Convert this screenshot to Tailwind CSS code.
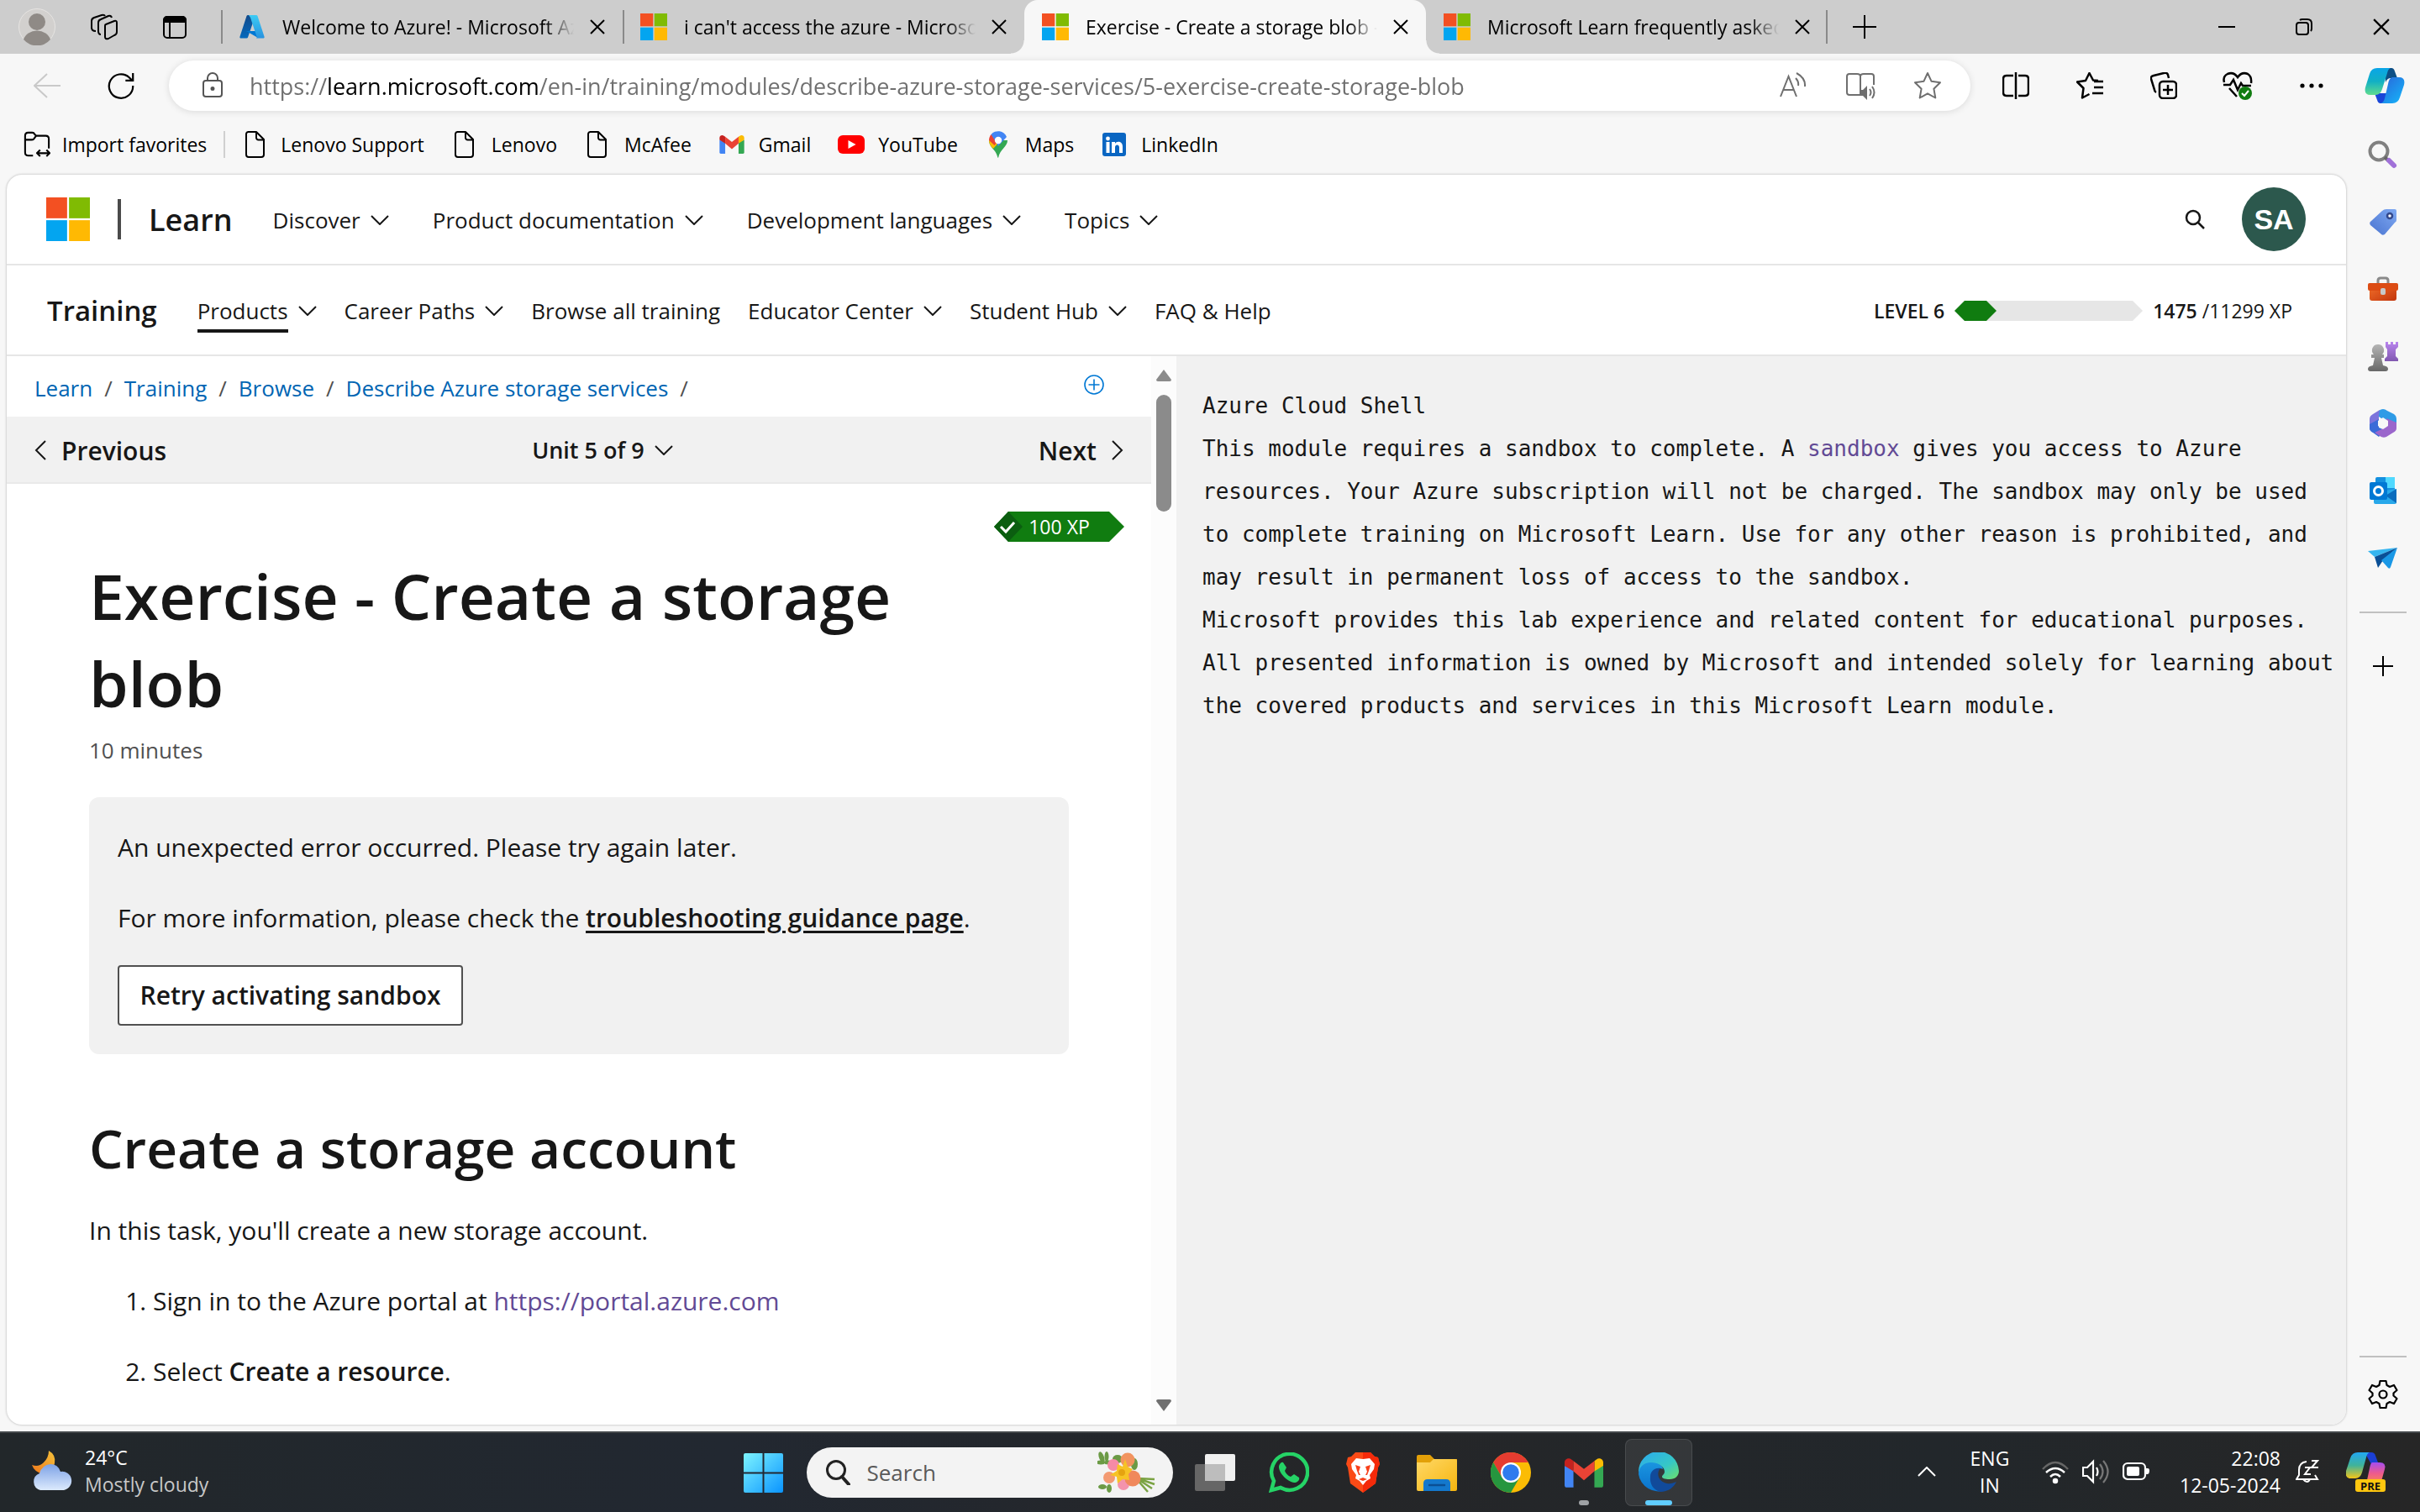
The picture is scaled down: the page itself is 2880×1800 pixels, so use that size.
<!DOCTYPE html>
<html lang="en">
<head>
<meta charset="utf-8">
<meta name="viewport" content="width=device-width, initial-scale=1">
<title>Exercise - Create a storage blob - Training | Microsoft Learn</title>
<script src="https://cdn.jsdelivr.net/npm/@tailwindcss/browser@4"></script>
</head>
<body class="min-h-screen flex flex-col overflow-hidden bg-[#f7f7f7] text-[#171717] font-['Open_Sans','Noto_Sans',sans-serif]">

<!-- Shared symbols -->
<svg class="absolute size-0" aria-hidden="true">
  <defs>
    <linearGradient id="azA" x1="0" y1="0" x2="0" y2="1"><stop offset="0" stop-color="#114a8b"/><stop offset="1" stop-color="#0669bc"/></linearGradient>
    <linearGradient id="azB" x1="0" y1="0" x2="0" y2="1"><stop offset="0" stop-color="#3ccbf4"/><stop offset="1" stop-color="#2892df"/></linearGradient>
    <linearGradient id="cpA" x1="0" y1="0" x2="0" y2="1"><stop offset="0" stop-color="#0aa5e8"/><stop offset=".5" stop-color="#12b0c4"/><stop offset="1" stop-color="#5fdc8e"/></linearGradient>
    <linearGradient id="cpB" x1="0" y1="0" x2="1" y2="1"><stop offset="0" stop-color="#2a62d8"/><stop offset="1" stop-color="#14b8fb"/></linearGradient>
    <linearGradient id="cqA" x1="0" y1="0" x2="0" y2="1"><stop offset="0" stop-color="#22a7f2"/><stop offset=".5" stop-color="#3fb39a"/><stop offset="1" stop-color="#f5c518"/></linearGradient>
    <linearGradient id="cqB" x1="0" y1="0" x2="0" y2="1"><stop offset="0" stop-color="#a44df0"/><stop offset=".5" stop-color="#ee5a8c"/><stop offset="1" stop-color="#fb8a4a"/></linearGradient>
    <linearGradient id="winG" x1="0" y1="0" x2="1" y2="1"><stop offset="0" stop-color="#7df4ff"/><stop offset="1" stop-color="#0a94ff"/></linearGradient>
    <linearGradient id="tagG" x1="1" y1="0" x2="0" y2="1"><stop offset="0" stop-color="#7fa9f2"/><stop offset="1" stop-color="#4a74d0"/></linearGradient>
    <linearGradient id="boxG" x1="0" y1="0" x2="1" y2="1"><stop offset="0" stop-color="#f3702a"/><stop offset="1" stop-color="#c2350c"/></linearGradient>
    <linearGradient id="greyG" x1="0" y1="0" x2="0" y2="1"><stop offset="0" stop-color="#b5b5b5"/><stop offset="1" stop-color="#686868"/></linearGradient>
    <linearGradient id="purG" x1="0" y1="0" x2="0" y2="1"><stop offset="0" stop-color="#b985ee"/><stop offset="1" stop-color="#8158b0"/></linearGradient>
    <linearGradient id="cldG" x1="0" y1="0" x2="0" y2="1"><stop offset="0" stop-color="#7da2e6"/><stop offset="1" stop-color="#dceafd"/></linearGradient>
    <linearGradient id="moonG" x1="1" y1="0" x2="0" y2="1"><stop offset="0" stop-color="#f4c23b"/><stop offset="1" stop-color="#f0761a"/></linearGradient>
    <linearGradient id="fldG" x1="0" y1="0" x2="1" y2="1"><stop offset="0" stop-color="#ffd866"/><stop offset="1" stop-color="#f6b50f"/></linearGradient>
    <linearGradient id="edgA" x1="0" y1="0" x2="1" y2="1"><stop offset="0" stop-color="#2aa9f0"/><stop offset=".6" stop-color="#36c7c6"/><stop offset="1" stop-color="#6ee06a"/></linearGradient>
    <linearGradient id="edgB" x1="0" y1="0" x2="0" y2="1"><stop offset="0" stop-color="#1a95e0"/><stop offset="1" stop-color="#0a72cc"/></linearGradient>
    <symbol id="ms" viewBox="0 0 32 32"><path fill="#f35022" d="M0 0h15.3v15.3H0z"/><path fill="#80bb03" d="M16.7 0H32v15.3H16.7z"/><path fill="#03a5f0" d="M0 16.7h15.3V32H0z"/><path fill="#ffb903" d="M16.7 16.7H32V32H16.7z"/></symbol>
    <symbol id="chev" viewBox="0 0 22 12"><path d="M1 1l10 10L21 1" fill="none" stroke="currentColor" stroke-width="2"/></symbol>
    <symbol id="x" viewBox="0 0 18 18"><path d="M1 1l16 16M17 1L1 17" fill="none" stroke="currentColor" stroke-width="2"/></symbol>
    <symbol id="file" viewBox="0 0 32 32"><path d="M7 1h10l9 9v18a3 3 0 0 1-3 3H8a3 3 0 0 1-3-3V3.5A2.500 2.500 0 0 1 7.500 1M17 1v7a2.500 2.500 0 0 0 2.500 2.500H26" fill="none" stroke="currentColor" stroke-width="2" stroke-linejoin="round"/></symbol>
    <symbol id="gmail" viewBox="0 0 48 36"><path fill="#4285f4" d="M0 9v24a3 3 0 0 0 3 3h8V14z"/><path fill="#34a853" d="M48 9v24a3 3 0 0 1-3 3h-8V14z"/><path fill="#c5221f" d="M0 9V5c0-4 5-6.500 8.500-3.800L11 3v13z"/><path fill="#fbbc04" d="M48 9V5c0-4-5-6.500-8.500-3.800L37 3v13z"/><path fill="#ea4335" d="M11 3l13 10L37 3v13L24 27 11 16z"/></symbol>
  </defs>
</svg>

<!-- Tab strip -->
<header class="flex items-center h-16 bg-[#cdcdcd] text-black">
  <button class="ml-[22px]" aria-label="Profile"><svg class="size-11 block" viewBox="0 0 44 44"><circle cx="22" cy="22" r="21.500" fill="#d2d0ce" stroke="#e6e4e2"/><circle cx="22" cy="16" r="10" fill="#8f8a86"/><path d="M6 36a16.500 14 0 0 1 32 0 21 21 0 0 1-32 0z" fill="#8f8a86" transform="translate(0 1)"/></svg></button>
  <button class="ml-[42px]" aria-label="Workspaces"><svg class="size-8 block" viewBox="0 0 32 32" fill="none" stroke="currentColor" stroke-width="2" stroke-linejoin="round"><path d="M18 13l10-4q3-1 3 2v11q0 3-3 4l-7 4q-4 1-4-2V15q0-2 1-2z"/><path d="M12 25q-3 0-3-4V11q0-3 3-4l9-4q3-1 4 2"/><path d="M6 20q-5 0-5-4V8q0-3 3-4l9-3q3-1 4 1" transform="translate(0 1)"/></svg></button>
  <button class="ml-[52px]" aria-label="Tab actions"><svg class="size-8 block" viewBox="0 0 32 32"><rect x="3" y="4" width="26" height="25" rx="4" fill="none" stroke="currentColor" stroke-width="2"/><path d="M2 11V8a5 5 0 0 1 5-5h18a5 5 0 0 1 5 5v3zM9 11h2v18H9z"/></svg></button>
  <div class="flex ml-[39px] h-16 text-[23px]" role="tablist">
    <div role="tab" class="relative flex items-center w-[478px] pl-[21px] before:absolute before:left-0 before:top-3 before:h-10 before:w-[2px] before:bg-[#8a8a8a]">
      <svg class="size-8" viewBox="0 0 32 32"><path fill="url(#azA)" d="M11 2h9L11 28.500a1.600 1.600 0 0 1-1.500 1H3a1.600 1.600 0 0 1-1.500-2.100L9.500 3A1.600 1.600 0 0 1 11 2z"/><path fill="#0078d4" d="M8.500 21h13.500l1 8-13-7.500z"/><path fill="url(#azB)" d="M12 2h9a1.600 1.600 0 0 1 1.500 1.100l8 24.300a1.600 1.600 0 0 1-1.500 2.100H20a1.600 1.600 0 0 0 1.500-2.100L14 5z"/></svg>
      <span class="ml-5 w-[347px] overflow-hidden whitespace-nowrap [mask-image:linear-gradient(to_right,black_90%,transparent)]">Welcome to Azure! - Microsoft Azure</span>
      <button class="ml-[19px]" aria-label="Close tab"><svg class="size-[18px] block"><use href="#x"/></svg></button>
    </div>
    <div role="tab" class="relative flex items-center w-[478px] pl-[21px] before:absolute before:left-0 before:top-3 before:h-10 before:w-[2px] before:bg-[#8a8a8a]">
      <svg class="size-8"><use href="#ms"/></svg>
      <span class="ml-5 w-[347px] overflow-hidden whitespace-nowrap [mask-image:linear-gradient(to_right,black_90%,transparent)]">i can't access the azure - Microsoft Q&amp;A</span>
      <button class="ml-[19px]" aria-label="Close tab"><svg class="size-[18px] block"><use href="#x"/></svg></button>
    </div>
    <div role="tab" aria-selected="true" class="relative flex items-center w-[478px] pl-[21px] rounded-t-[16px] bg-[#f7f7f7] before:absolute before:-left-4 before:bottom-0 before:size-4 before:bg-[radial-gradient(circle_at_0_0,transparent_15px,#f7f7f7_16px)] after:absolute after:-right-4 after:bottom-0 after:size-4 after:bg-[radial-gradient(circle_at_100%_0,transparent_15px,#f7f7f7_16px)]">
      <svg class="size-8"><use href="#ms"/></svg>
      <span class="ml-5 w-[347px] overflow-hidden whitespace-nowrap [mask-image:linear-gradient(to_right,black_90%,transparent)]">Exercise - Create a storage blob - Training</span>
      <button class="ml-[19px]" aria-label="Close tab"><svg class="size-[18px] block"><use href="#x"/></svg></button>
    </div>
    <div role="tab" class="relative flex items-center w-[478px] pl-[21px] after:absolute after:right-0 after:top-3 after:h-10 after:w-[2px] after:bg-[#8a8a8a]">
      <svg class="size-8"><use href="#ms"/></svg>
      <span class="ml-5 w-[347px] overflow-hidden whitespace-nowrap [mask-image:linear-gradient(to_right,black_90%,transparent)]">Microsoft Learn frequently asked questions</span>
      <button class="ml-[19px]" aria-label="Close tab"><svg class="size-[18px] block"><use href="#x"/></svg></button>
    </div>
  </div>
  <button class="ml-[30px]" aria-label="New tab"><svg class="size-7 block" viewBox="0 0 28 28"><path d="M14 0v28M0 14h28" stroke="currentColor" stroke-width="2"/></svg></button>
  <div class="ml-auto flex">
    <button class="w-[92px] flex justify-center" aria-label="Minimise"><svg class="size-5" viewBox="0 0 20 20"><path d="M0 10h20" stroke="currentColor" stroke-width="2"/></svg></button>
    <button class="w-[92px] flex justify-center" aria-label="Restore"><svg class="size-5" viewBox="0 0 20 20" fill="none" stroke="currentColor" stroke-width="2"><rect x="1" y="5" width="14" height="14" rx="3"/><path d="M5 2q1-1 3-1h6q5 0 5 5v6q0 2-1 3"/></svg></button>
    <button class="w-[92px] flex justify-center" aria-label="Close"><svg class="size-5"><use href="#x"/></svg></button>
  </div>
</header>

<!-- Toolbar -->
<div class="flex items-center h-[76px] text-black">
  <button class="ml-10" aria-label="Back" disabled><svg class="size-8 block" viewBox="0 0 32 32" fill="none" stroke="#c9c9c9" stroke-width="2"><path d="M32 16H1M16 2L1 16l15 14"/></svg></button>
  <button class="ml-14" aria-label="Refresh"><svg class="size-8 block" viewBox="0 0 36 36" fill="none" stroke="currentColor" stroke-width="2.500"><path d="M34 18A16 16 0 1 1 29 7l4 4M34 1v10h-10"/></svg></button>
  <div class="ml-[41px] flex-1 flex items-center h-[60px] rounded-full bg-white shadow-[0_1px_8px_rgba(0,0,0,0.12)] text-[#6f6f6f]">
    <svg class="ml-9 size-8" viewBox="0 0 32 32" fill="none" stroke="#555" stroke-width="2"><rect x="5" y="10" width="22" height="19" rx="3"/><path d="M10 10V7a6 6 0 0 1 12 0v3"/><circle cx="16" cy="19.500" r="1.500" fill="#555"/></svg>
    <input type="text" aria-label="Address" value="https://learn.microsoft.com/en-in/training/modules/describe-azure-storage-services/5-exercise-create-storage-blob" class="ml-7 flex-1 h-11 text-[27px] outline-none text-transparent bg-clip-text bg-[linear-gradient(to_right,#6f6f6f_93px,#000_93px,#000_343px,#6f6f6f_343px)]">
    <button class="w-20 flex justify-center" aria-label="Read aloud"><svg class="size-8" viewBox="0 0 32 32" fill="none" stroke="currentColor" stroke-width="2"><path d="M1 29L10.500 5 20 29M4.500 21h12M19 7q4 4 3 9M20 1q11 6 10 16"/></svg></button>
    <button class="w-20 flex justify-center" aria-label="Immersive reader"><svg class="size-9" viewBox="0 0 36 36"><path d="M18 5v24M19 29H5q-3 0-3-3V7q0-3 3-3h9q4 0 4 3 0-3 4-3h9q3 0 3 3v10" fill="none" stroke="currentColor" stroke-width="2"/><path d="M18 23h3l5-5v17l-5-5h-3z" fill="currentColor"/><path d="M29 22q3 4 0 8M32 19q5 7 0 14" fill="none" stroke="currentColor" stroke-width="2"/></svg></button>
    <button class="w-20 mr-[11px] flex justify-center" aria-label="Add to favourites"><svg class="size-[34px]" viewBox="0 0 34 34" fill="none" stroke="currentColor" stroke-width="2" stroke-linejoin="round"><path d="M17 2l4.600 9.800 10.400 1.400-7.600 7.500 1.900 10.800L17 26.300l-9.300 5.200 1.900-10.800L2 13.200l10.400-1.400z"/></svg></button>
  </div>
  <div class="flex items-center ml-[10px]">
    <button class="w-[88px] flex justify-center" aria-label="Split screen"><svg class="size-8" viewBox="0 0 32 32" fill="none" stroke="currentColor" stroke-width="2.500"><path d="M13 28H5q-4 0-4-4V8q0-4 4-4h8M19 4h8q4 0 4 4v16q0 4-4 4h-8M16 0v32"/></svg></button>
    <button class="w-[88px] flex justify-center" aria-label="Favourites"><svg class="size-8" viewBox="0 0 32 32" fill="none" stroke="currentColor" stroke-width="2.500" stroke-linejoin="round"><path d="M26 10l-6-.5L15.500 1 11 10 1 11.500l7.500 7.500L7 30.500l8.500-4.500M21 11h11M21 18h11M19 25h13"/></svg></button>
    <button class="w-[88px] flex justify-center" aria-label="Collections"><svg class="size-8" viewBox="0 0 32 32" fill="none" stroke="currentColor" stroke-width="2.500"><rect x="11" y="11" width="20" height="20" rx="4"/><path d="M21 15v12M15 21h12M7 24q-2-1-2-3L1 8Q0 5 4 4l12-3q4-1 5 2l1 4"/></svg></button>
    <button class="w-[88px] flex justify-center" aria-label="Browser essentials"><svg class="size-9" viewBox="0 0 36 36" fill="none" stroke="currentColor" stroke-width="2.500"><path d="M2 14Q0 7 6 4q7-3 12 4 5-7 12-4 5 3 4 11M8 21l9 10"/><path d="M1 17h8l4-6 5 12 4-8 2 3h10"/><circle cx="27" cy="27" r="8" fill="#107c10" stroke="none"/><path d="M23 27l3 3 5-6" stroke="#fff" stroke-width="2"/></svg></button>
    <button class="w-[88px] flex justify-center" aria-label="Settings and more"><svg class="w-7 h-2" viewBox="0 0 28 8"><circle cx="3" cy="4" r="2.600"/><circle cx="14" cy="4" r="2.600"/><circle cx="25" cy="4" r="2.600"/></svg></button>
    <button class="w-[85px] flex justify-center" aria-label="Copilot"><svg class="size-12" viewBox="0 0 48 48"><path d="M24 3h8q3 0 4 4l3 8h-8q-4 0-6 5z" fill="#0d4f86"/><path d="M12 33h16l-4 12h-5q-3 0-4-4z" fill="#1a46d8"/><path d="M15 3h16q-3 1-4 6l-6 19q-2 7-8 7H7q-8 0-6-9L6 10q2-7 9-7z" fill="url(#cpA)"/><path d="M33 14h8q8 0 6 9l-5 15q-2 7-9 7H19q4-1 5-6l4-17q1-7 5-8z" fill="url(#cpB)"/></svg></button>
  </div>
</div>

<div class="flex-1 flex min-h-0">
  <div class="flex-1 flex flex-col min-w-0">
    <!-- Favourites bar -->
    <nav class="flex items-center gap-8 h-16 pl-7 text-[23px] text-black whitespace-nowrap" aria-label="Favourites bar">
      <a href="#" class="flex items-center gap-[14px]"><svg class="size-8" viewBox="0 0 34 34" fill="none" stroke="currentColor" stroke-width="2.200" stroke-linejoin="round"><path d="M12 31H6q-4 0-4-4V6q0-4 4-4h5q2 0 3 2l2 2h12q4 0 4 4v12M2 11h8q2 0 3-1l3-4M17 28h16M21 24l-4 4 4 4M29 24l4 4-4 4"/></svg>Import favorites</a>
      <span class="h-8 w-[2px] -ml-3 -mr-3 bg-[#d0d0d0]"></span>
      <a href="#" class="flex items-center gap-[14px]"><svg class="size-8"><use href="#file"/></svg>Lenovo Support</a>
      <a href="#" class="flex items-center gap-4"><svg class="size-8"><use href="#file"/></svg>Lenovo</a>
      <a href="#" class="flex items-center gap-4"><svg class="size-8"><use href="#file"/></svg>McAfee</a>
      <a href="#" class="flex items-center gap-4"><svg class="w-8 h-[22px]"><use href="#gmail"/></svg>Gmail</a>
      <a href="#" class="flex items-center gap-4"><svg class="size-8" viewBox="0 0 32 32"><rect y="5" width="32" height="22" rx="6" fill="#f00"/><path d="M12.500 11l9 5-9 5z" fill="#fff"/></svg>YouTube</a>
      <a href="#" class="flex items-center gap-4"><svg class="size-8" viewBox="0 0 32 32"><path d="M16 32c-1 0-1-4-4-8-3-4-7-7-7-13h22c0 8-9 10-11 21z" fill="#34a853"/><path d="M5 11c0 4 2 7 5 10l9-10z" fill="#fbbc04"/><path d="M5 11c0-3 1-5 2.500-7l9 7-5 6z" fill="#ea4335"/><path d="M7.500 4A11 11 0 0 1 26 7L16 18z" fill="#4285f4"/><circle cx="16" cy="11" r="4.200" fill="#fff"/></svg>Maps</a>
      <a href="#" class="flex items-center gap-4"><svg class="size-8" viewBox="0 0 32 32"><rect x="2" y="2" width="28" height="28" rx="3" fill="#0a66c2"/><g fill="#fff"><circle cx="8.500" cy="9" r="2.400"/><path d="M6.500 13h4v13h-4zM13 13h4v2c2-3.500 9-3 9 3.500V26h-4v-6.500c0-4-5-4-5 0V26h-4z"/></g></svg>LinkedIn</a>
    </nav>

    <!-- Page frame -->
    <div class="flex-1 flex flex-col min-h-0 ml-2 mt-1 mb-2 rounded-[18px] overflow-hidden bg-white shadow-[0_0_3px_rgba(0,0,0,0.3)]">
      <div class="flex items-center h-[108px] pl-[47px] pr-12 border-b-2 border-[#e6e6e6] text-[26px] whitespace-nowrap">
        <a href="#" aria-label="Microsoft"><svg class="size-[52px] block"><use href="#ms"/></svg></a>
        <span class="ml-[33px] w-[4px] h-12 bg-[#4a4a4a]"></span>
        <a href="#" class="ml-[33px] pt-[2px] text-[36px] font-semibold">Learn</a>
        <nav class="flex ml-12 gap-[52px] pt-[2px]">
          <button class="flex items-center gap-3">Discover<svg class="w-[22px] h-3"><use href="#chev"/></svg></button>
          <button class="flex items-center gap-3">Product documentation<svg class="w-[22px] h-3"><use href="#chev"/></svg></button>
          <button class="flex items-center gap-3">Development languages<svg class="w-[22px] h-3"><use href="#chev"/></svg></button>
          <button class="flex items-center gap-3">Topics<svg class="w-[22px] h-3"><use href="#chev"/></svg></button>
        </nav>
        <button class="ml-auto" aria-label="Search"><svg class="size-6 block" viewBox="0 0 24 24" fill="none" stroke="currentColor" stroke-width="2.500"><circle cx="10" cy="10" r="8"/><path d="M15.500 15.500L23 23"/></svg></button>
        <button class="ml-11 size-[76px] rounded-full bg-[#2c584d] text-white font-bold text-[34px] font-['Liberation_Sans',sans-serif]">SA</button>
      </div>
      <div class="flex items-center h-[108px] pl-12 pr-16 pt-[2px] border-b-2 border-[#e6e6e6] text-[26px] whitespace-nowrap">
        <a href="#" class="text-[33px] font-semibold">Training</a>
        <nav class="flex ml-12 gap-[33px]">
          <button class="flex items-center gap-3"><span class="relative after:absolute after:inset-x-0 after:-bottom-[6px] after:h-[4px] after:bg-[#171717]">Products</span><svg class="w-[22px] h-3"><use href="#chev"/></svg></button>
          <button class="flex items-center gap-3">Career Paths<svg class="w-[22px] h-3"><use href="#chev"/></svg></button>
          <a href="#">Browse all training</a>
          <button class="flex items-center gap-3">Educator Center<svg class="w-[22px] h-3"><use href="#chev"/></svg></button>
          <button class="flex items-center gap-3">Student Hub<svg class="w-[22px] h-3"><use href="#chev"/></svg></button>
          <a href="#">FAQ &amp; Help</a>
        </nav>
        <div class="ml-auto flex items-center gap-3 text-[23px]">
          <span class="font-semibold">LEVEL 6</span>
          <svg class="w-56 h-6" viewBox="0 0 224 24"><path fill="#e6e6e6" d="M12 0h200l12 12-12 12H12L0 12z"/><path fill="#107c10" d="M12 0h26l12 12-12 12H12L0 12z"/></svg>
          <span><b class="font-semibold">1475</b> /11299 XP</span>
        </div>
      </div>

      <div class="flex-1 flex min-h-0">
        <!-- Unit -->
        <main class="flex-1 min-w-0 overflow-hidden">
          <div class="flex items-center justify-between h-[72px] pt-1 pl-[33px] pr-14 text-[26px] text-[#505050]">
            <nav class="flex gap-[14px]" aria-label="Breadcrumb"><a href="#" class="text-[#0065b3]">Learn</a>/<a href="#" class="text-[#0065b3]">Training</a>/<a href="#" class="text-[#0065b3]">Browse</a>/<a href="#" class="text-[#0065b3]">Describe Azure storage services</a>/</nav>
            <button class="pb-2" aria-label="Add"><svg class="size-6 block" viewBox="0 0 24 24" fill="none" stroke="#0078d4" stroke-width="1.600"><circle cx="12" cy="12" r="11"/><path d="M12 5.500v13M5.500 12h13"/></svg></button>
          </div>
          <div class="flex items-center justify-between h-20 px-[33px] pt-[2px] bg-[#f1f1f1] border-b-2 border-[#e9e9e9] font-semibold">
            <a href="#" class="flex items-center gap-[18px] text-[30px]"><svg class="w-[14px] h-6" viewBox="0 0 14 24"><path d="M13 1L2 12l11 11" fill="none" stroke="currentColor" stroke-width="2"/></svg>Previous</a>
            <button class="flex items-center gap-3 text-[27px]">Unit 5 of 9<svg class="w-[22px] h-3"><use href="#chev"/></svg></button>
            <a href="#" class="flex items-center gap-[18px] text-[30px]">Next<svg class="w-[14px] h-6" viewBox="0 0 14 24"><path d="M1 1l11 11L1 23" fill="none" stroke="currentColor" stroke-width="2"/></svg></a>
          </div>
          <div class="flex justify-end pt-[33px] pr-8">
            <span class="relative flex items-center justify-center w-[155px] h-9 text-[23px] text-white"><svg class="absolute inset-0 size-full" viewBox="0 0 155 36"><path fill="#107c10" d="M17 0h120l18 18-18 18H17L0 18z"/><path fill="#0b5e10" d="M17 0l17 18-17 18L0 18z"/><path d="M8 18l6 6L24 13" fill="none" stroke="#fff" stroke-width="3"/></svg><span class="relative">100 XP</span></span>
          </div>
          <article class="pl-[98px] pr-[98px] text-[30px] leading-[48px]">
            <h1 class="mt-3 pr-12 text-[75px] leading-[104px] font-semibold">Exercise - Create a storage blob</h1>
            <p class="mt-2 text-[26px] leading-10 text-[#505050]">10 minutes</p>
            <section class="mt-9 rounded-xl bg-[#f1f1f1] px-[34px] pt-9 pb-[34px]">
              <p>An unexpected error occurred. Please try again later.</p>
              <p class="mt-9">For more information, please check the <a href="#" class="font-semibold underline decoration-[3px] underline-offset-4">troubleshooting guidance page</a>.</p>
              <button class="mt-8 h-[72px] w-[411px] rounded border-2 border-[#505050] bg-white font-semibold whitespace-nowrap">Retry activating sandbox</button>
            </section>
            <h2 class="mt-[70px] text-[64px] leading-[84px] font-semibold">Create a storage account</h2>
            <p class="mt-8">In this task, you'll create a new storage account.</p>
            <ol class="mt-9 pl-[76px] list-decimal space-y-9">
              <li>Sign in to the Azure portal at <a href="#" class="text-[#624a95]">https://portal.azure.com</a></li>
              <li>Select <b class="font-semibold">Create a resource</b>.</li>
            </ol>
          </article>
        </main>
        <!-- Scrollbar -->
        <div class="w-[30px] flex flex-col items-center pt-4 pb-4 bg-[#fcfcfc]">
          <svg class="w-5 h-[14px]" viewBox="0 0 20 14"><path d="M10 0l9 12q0 2-2 2H3q-2 0-2-2z" fill="#8b8b8b"/></svg>
          <div class="mt-4 w-[18px] h-[139px] rounded-full bg-[#8b8b8b]"></div>
          <svg class="mt-auto w-5 h-[14px]" viewBox="0 0 20 14"><path d="M10 14l9-12q0-2-2-2H3Q1 0 1 2z" fill="#707070"/></svg>
        </div>
        <!-- Cloud shell -->
        <aside class="w-[1392px] pl-[31px] pr-3 pt-[34px] bg-[#f1f1f1] text-[26px] leading-[51px] font-['DejaVu_Sans_Mono',monospace]">
          <p>Azure Cloud Shell</p>
          <p>This module requires a sandbox to complete. A <a href="#" class="text-[#624a95]">sandbox</a> gives you access to Azure resources. Your Azure subscription will not be charged. The sandbox may only be used to complete training on Microsoft Learn. Use for any other reason is prohibited, and may result in permanent loss of access to the sandbox.</p>
          <p>Microsoft provides this lab experience and related content for educational purposes. All presented information is owned by Microsoft and intended solely for learning about the covered products and services in this Microsoft Learn module.</p>
        </aside>
      </div>
    </div>
  </div>

  <!-- Browser side bar -->
  <aside class="w-[88px] flex flex-col items-center pt-1 pb-[26px] text-black">
    <button class="h-20" aria-label="Search"><svg class="size-9" viewBox="0 0 36 36"><circle cx="13" cy="14" r="10.500" fill="none" stroke="#808080" stroke-width="4"/><path d="M20 21l4 4" stroke="#666" stroke-width="4"/><path d="M25 25l6 6" stroke="#a071d8" stroke-width="6" stroke-linecap="round"/></svg></button>
    <button class="h-20" aria-label="Shopping"><svg class="size-9" viewBox="0 0 36 36"><path d="M22 3h10q2 0 2 2v11q0 2-2 3L20 33q-3 2-5-1L3 22q-2-3 1-5L17 5q2-2 5-2z" fill="url(#tagG)"/><circle cx="26" cy="11" r="3" fill="#fff" stroke="#33488c" stroke-width="2.500"/></svg></button>
    <button class="h-20" aria-label="Tools"><svg class="size-9" viewBox="0 0 36 36"><path d="M12 12V8q0-3 3-3h6q3 0 3 3v4" fill="none" stroke="#8a8a8a" stroke-width="3"/><rect x="2" y="12" width="32" height="20" rx="3" fill="url(#boxG)"/><rect y="11" width="36" height="9" rx="2" fill="#dc4c14"/><rect x="15" y="17" width="6" height="8" rx="2" fill="#c8c8c8"/></svg></button>
    <button class="h-20" aria-label="Games"><svg class="size-9" viewBox="0 0 36 36"><path d="M21 1h3v3h3V1h3v3h3V1h3v6l-3 3v8l3 3v3H20v-3l3-3v-8l-2-3z" fill="url(#purG)"/><path d="M12 4a7 7 0 0 1 5 12h2v4h-3l2 9q6 1 6 4 0 3-3 3H3q-3 0-3-3 0-3 6-4l2-9H4v-4h3A7 7 0 0 1 12 4z" fill="url(#greyG)"/></svg></button>
    <button class="h-20" aria-label="Microsoft 365"><svg class="size-9" viewBox="0 0 36 36"><path d="M13 3q5-4 10 0l8 4q3 2 3 6v11L13 10z" fill="#2f9be6"/><path d="M14 2L6 7q-4 2-4 6v10q0 4 5 6l6-4V9z" fill="#7c74dc"/><path d="M2 19v5q0 3 4 5l7 5 7-8-7-3V13z" fill="#3a6bd8"/><path d="M34 17v7q0 3-4 5l-8 5q-4 2-8-1l-6-4 14-7V12z" fill="#9b66cc"/><path d="M18 11l6 4v6l-6 4-6-4v-6z" fill="#f7f7f7"/></svg></button>
    <button class="h-20" aria-label="Outlook"><svg class="size-9" viewBox="0 0 36 36"><rect x="9" y="2" width="23" height="24" rx="2" fill="#1490df"/><path d="M21 2h11v13H21z" fill="#50d9ff"/><path d="M7 20l27-4v16q0 2-2 2H9q-2 0-2-2z" fill="#28a8ea"/><path d="M34 16v17L21 24z" fill="#0a6cbd"/><rect x="2" y="8" width="21" height="21" rx="2" fill="#0078d4"/><circle cx="12.500" cy="18.500" r="5" fill="none" stroke="#fff" stroke-width="3"/></svg></button>
    <button class="h-20" aria-label="Drop"><svg class="size-9" viewBox="0 0 36 36"><path d="M0 10L35 6 8 17z" fill="#35b5f0"/><path d="M35 6L8 17l4 13 6-9z" fill="#0a4f96"/><path d="M35 6L16 21l8 9q2 2 3-1z" fill="#1a98e6"/></svg></button>
    <span class="mt-6 h-[2px] w-14 bg-[#c0c0c0]"></span>
    <button class="mt-[51px]" aria-label="Customise"><svg class="size-6 block" viewBox="0 0 24 24"><path d="M12 0v24M0 12h24" stroke="currentColor" stroke-width="2"/></svg></button>
    <span class="mt-auto h-[2px] w-14 bg-[#c0c0c0]"></span>
    <button class="mt-[26px]" aria-label="Settings"><svg class="size-9 block" viewBox="0 0 36 36" fill="none" stroke="currentColor" stroke-width="2.200" stroke-linejoin="round"><path d="M14.500 2h7l1 5 3.500 2 5-2 3.500 6-4 3.500v3l4 3.500-3.500 6-5-2-3.500 2-1 5h-7l-1-5-3.500-2-5 2L1.500 23l4-3.500v-3L1.500 13 5 7l5 2 3.500-2z"/><circle cx="18" cy="18" r="4.500"/></svg></button>
  </aside>
</div>

<!-- Task bar -->
<footer class="grid grid-cols-[1fr_auto_1fr] items-center h-24 border-t-2 border-[#44484b] bg-[linear-gradient(to_right,#22272a,#222831_30%,#252628_55%,#22272b_80%,#262626)] text-white text-[23px]">
  <button class="flex items-center pl-[37px] pb-1 gap-[14px] text-left leading-8">
    <svg class="size-[50px]" viewBox="0 0 50 50"><path d="M21 1q9 5 7 15t-13 13Q4 27 1 18q8 3 14-3T21 1z" fill="url(#moonG)"/><path d="M11 48a10.500 10.500 0 0 1-1-20q3-10 13-11 9 0 12 9a11 11 0 0 1 4 22z" fill="url(#cldG)"/></svg>
    <span class="block">24°C<br><span class="text-[#c8c8c8]">Mostly cloudy</span></span>
  </button>
  <div class="flex items-center pl-[18px]">
    <button aria-label="Start"><svg class="size-[47px] block" viewBox="0 0 47 47"><path fill="url(#winG)" d="M2 0h20.500v22.500H0V2q0-2 2-2zM24.500 0H45q2 0 2 2v20.500H24.500zM0 24.500h22.500V47H2q-2 0-2-2zM24.500 24.500H47V45q0 2-2 2H24.500z"/></svg></button>
    <label class="ml-7 flex items-center w-[436px] h-[60px] rounded-full bg-[#f3f3f3] pl-[22px] pr-5">
      <svg class="size-[30px]" viewBox="0 0 30 30" fill="none" stroke="#222" stroke-width="3"><circle cx="13" cy="12" r="10.500"/><path d="M20 20l8 9" stroke-width="4" stroke-linecap="round"/></svg>
      <input type="search" placeholder="Search" class="ml-5 w-[200px] text-[26px] outline-none text-[#555] placeholder:text-[#5a5a5a]">
      <svg class="ml-auto w-[70px] h-[50px]" viewBox="0 0 70 50"><g stroke="#7ba343" stroke-width="2.500" fill="none"><path d="M48 32l20 1M48 32l20 7M47 32l18 12M46 32l14 16"/></g><g fill="#6b9a45"><ellipse cx="5" cy="7" rx="3" ry="7" transform="rotate(-20 5 7)"/><ellipse cx="11" cy="6" rx="2.500" ry="6"/><ellipse cx="4" cy="13" rx="5" ry="2.500"/><ellipse cx="13" cy="13" rx="5" ry="2.500"/><ellipse cx="6" cy="42" rx="5" ry="3"/><ellipse cx="14" cy="44" rx="3" ry="5"/><ellipse cx="24" cy="9" rx="6" ry="5"/><ellipse cx="44" cy="15" rx="4" ry="7"/></g><circle cx="19" cy="16" r="7" fill="#f58aa6"/><circle cx="31" cy="39" r="7" fill="#f493ac"/><circle cx="36" cy="10" r="8.500" fill="#f2945f"/><circle cx="14" cy="31" r="7" fill="#f39a72"/><circle cx="42" cy="32" r="9.500" fill="#f0885c"/><path d="M33 9l3 9 6 3-5 6 1 7-8-1-6 5-1-8-8-2 8-5 1-8 6 3z" fill="#f7c325"/><circle cx="29" cy="25" r="4" fill="#e5a310"/></svg>
    </label>
    <button class="ml-[26px]" aria-label="Task view"><svg class="size-12 block" viewBox="0 0 48 48"><rect y="14" width="36" height="32" rx="2" fill="#666"/><rect x="12" y="2" width="36" height="32" rx="2" fill="#f0f0f0"/><path d="M12 14h24v20H12z" fill="#bdbdbd"/></svg></button>
    <button class="ml-10" aria-label="WhatsApp"><svg class="size-12 block" viewBox="0 0 48 48"><path d="M3 45l3-11A21.500 21.500 0 1 1 14 42z" fill="none" stroke="#25d366" stroke-width="4.500"/><path d="M17 12c-2-1-5 2-5 6 1 8 10 17 18 18 4 0 7-3 6-6l-6-4-4 3c-3-1-6-4-7-7l2-4z" fill="#25d366"/></svg></button>
    <button class="ml-10" aria-label="Brave"><svg class="size-12 block" viewBox="0 0 48 48"><path d="M15 0h18l5 5 4 1 2 8-2 4-3 19-15 11L9 37 6 18l-2-4 2-8 4-1z" fill="#fb4a16"/><path d="M24 0h9l5 5 4 1 2 8-2 4-3 19-15 11z" fill="#f42a0a"/><path d="M24 8l8-1 6 7-1 6-5 7 1 4-5 3-4 5-4-5-5-3 1-4-5-7-1-6 6-7z" fill="#fff"/><path d="M15 15l6 2-2 6 2 4h-2l-2-5zM33 15l-6 2 2 6-2 4h2l2-5zM19 32l5-2 5 2-5 2z" fill="#f8401a"/></svg></button>
    <button class="ml-10" aria-label="File Explorer"><svg class="size-12 block" viewBox="0 0 48 48"><path d="M0 14V5q0-2 2-2h14l5 5h27v10z" fill="#e3a008"/><path d="M0 12h16l4-4h26q2 0 2 2v34q0 2-2 2H2q-2 0-2-2z" fill="url(#fldG)"/><path d="M8 46V37q0-5 5-5h22q5 0 5 5v9z" fill="#1478cc"/><path d="M15 39h18" stroke="#0b4f94" stroke-width="2.500" stroke-linecap="round"/></svg></button>
    <button class="ml-10" aria-label="Chrome"><svg class="size-12 block" viewBox="0 0 48 48"><circle cx="24" cy="24" r="24" fill="#fbbc04"/><path d="M3.200 12A24 24 0 0 1 44.800 12H24L13.600 30z" fill="#e53c30"/><path d="M3.200 12A24 24 0 0 0 24 48l10.400-18L24 24l-10.400 6z" fill="#26963f"/><circle cx="24" cy="24" r="12" fill="#fff"/><circle cx="24" cy="24" r="9.800" fill="#2f7bee"/></svg></button>
    <button class="relative ml-10 after:absolute after:left-[17px] after:-bottom-[21px] after:w-3 after:h-[6px] after:rounded-full after:bg-[#9fa2a5]" aria-label="Gmail"><svg class="w-[46px] h-[35px] block"><use href="#gmail"/></svg></button>
    <button class="relative ml-[26px] size-20 flex items-center justify-center rounded-lg bg-white/8 border border-white/10 after:absolute after:left-[23px] after:bottom-0 after:w-8 after:h-[6px] after:rounded-full after:bg-[#60cdff]" aria-label="Microsoft Edge"><svg class="size-12" viewBox="0 0 48 48"><path d="M0 24A24 24 0 0 1 48 22c0 6-4 10-11 10-6 0-9-1-9-3s3-3 3-6c0-5-5-9-12-9C10 14 3 18 0 24z" fill="url(#edgA)"/><path d="M0 26c0-8 6-14 15-14 8 0 14 4 14 8-6-3-13 1-13 9 0 9 7 14 16 16A24 24 0 0 1 0 26z" fill="url(#edgB)"/><path d="M26 47c-8-2-13-9-12-18 0-6 5-11 12-10-5 5-3 16 8 18 4 1 8-1 11-2-3 7-10 12-19 12z" fill="#114a9a"/></svg></button>
  </div>
  <div class="flex items-center justify-end pr-10 pb-[2px] leading-8">
    <button aria-label="Show hidden icons"><svg class="w-[22px] h-3 block rotate-180"><use href="#chev"/></svg></button>
    <button class="ml-10 w-12 text-center">ENG IN</button>
    <button class="ml-[38px] flex items-center gap-4" aria-label="Network, sound, battery">
      <svg class="size-8" viewBox="0 0 32 32" fill="none" stroke="#fff" stroke-width="2.500"><path d="M1 13Q16-3 31 13" stroke="#666"/><path d="M5 17q11-10 22 0M10 22q6-6 12 0"/><circle cx="16" cy="27" r="2" fill="#fff"/></svg>
      <svg class="size-8" viewBox="0 0 32 32" fill="none" stroke="#fff" stroke-width="2.200"><path d="M1 11h5l7-7v24l-7-7H1z"/><path d="M17 11q3 5 0 10"/><path d="M21 7q7 9 0 18M25 3q11 13 0 26" stroke="#777"/></svg>
      <svg class="size-8" viewBox="0 0 32 32"><rect x="1" y="6" width="26" height="19" rx="5" fill="none" stroke="#fff" stroke-width="2.200"/><rect x="5" y="10" width="15" height="11" rx="2" fill="#fff"/><path d="M28 12h2q2 0 2 3t-2 4h-2z" fill="#fff"/></svg>
    </button>
    <button class="ml-9 text-right">22:08<br>12-05-2024</button>
    <button class="ml-[18px]" aria-label="Notifications"><svg class="size-7 block" viewBox="0 0 28 28" fill="none" stroke="#fff" stroke-width="2"><path d="M13 2Q4 3 4 12v6l-3 5h25l-3-5M9 23q5 6 8 0M19 1h7l-7 8h8M11 9h6l-6 8h7"/></svg></button>
    <button class="ml-8" aria-label="Copilot preview"><svg class="size-12 block" viewBox="0 0 48 48"><path d="M22 1h8q4 0 5 4l3 8-8 2z" fill="#1b3fd4"/><path d="M14 1h14q-3 1-4 6l-5 18q-2 7-8 7H6q-8 0-6-9L5 8q2-7 9-7z" fill="url(#cqA)"/><path d="M31 13h9q8 0 6 8l-5 18H20q4-1 5-5l3-14q1-6 3-7z" fill="url(#cqB)"/><rect x="11" y="33" width="36" height="15" rx="3" fill="#ffc70f"/><text x="29" y="45.500" font-size="13" font-weight="700" text-anchor="middle" fill="#111">PRE</text></svg></button>
  </div>
</footer>
</body>
</html>
